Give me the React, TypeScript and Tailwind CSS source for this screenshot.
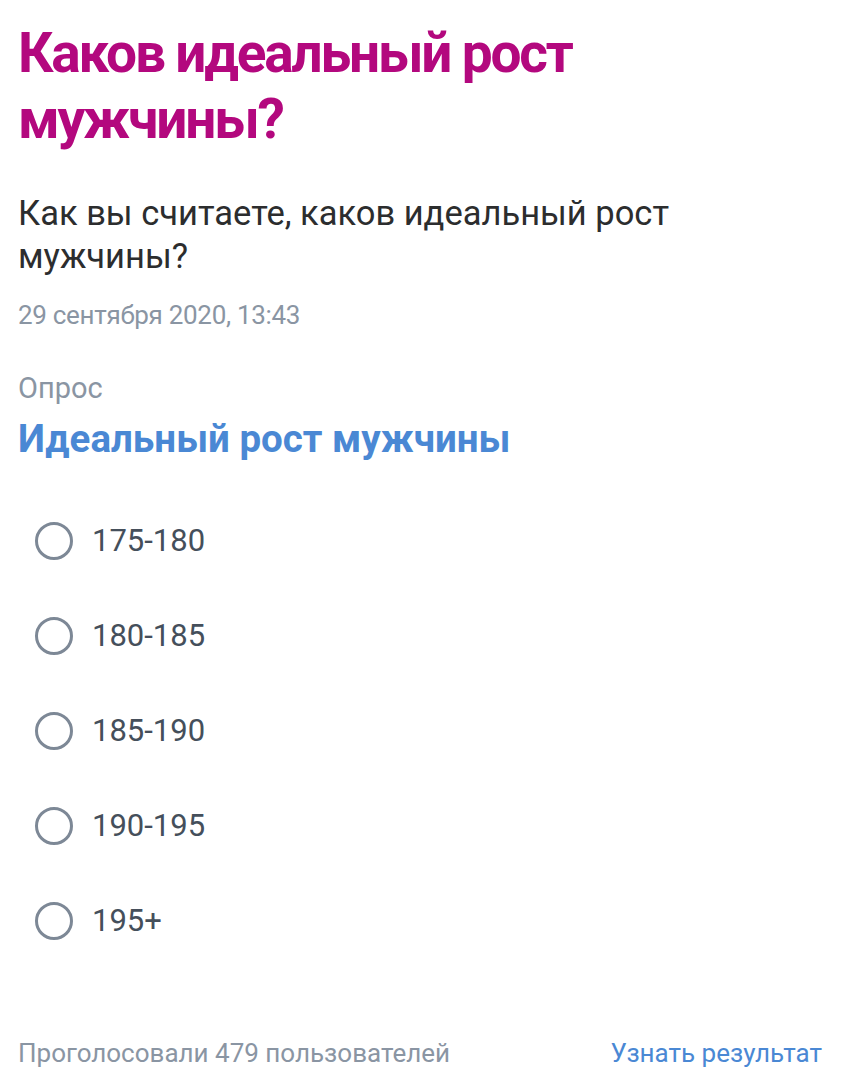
import React from "react"

const options = ["175-180", "180-185", "185-190", "190-195", "195+"]

const font = { fontFamily: "Roboto, 'Noto Sans', sans-serif" }

export default function App() {
  return (
    <div
      className="flex h-[1080px] w-[850px] flex-col bg-white"
      style={font}
    >
      <div className="flex flex-1 flex-col px-[18px]">
        <h1 className="mt-[20px] text-[55px] leading-[66px] font-bold tracking-[-2.2px] text-[#b3087e]">
          Каков идеальный рост мужчины?
        </h1>

        <p className="mt-[40px] w-[700px] text-[34.5px] leading-[43px] text-[#2c2d2e]">
          Как вы считаете, каков идеальный рост мужчины?
        </p>

        <div className="mt-[22px] text-[26px] leading-[30px] tracking-[-0.3px] text-[#8a95a3]">
          29 сентября 2020, 13:43
        </div>

        <div className="mt-[41px] text-[29px] leading-[34px] text-[#8a95a3]">
          Опрос
        </div>
        <div className="mt-[12px] text-[38.5px] leading-[44px] font-bold text-[#4a88d4]">
          Идеальный рост мужчины
        </div>

        <ul className="mt-[32px] flex flex-col">
          {options.map((o) => (
            <li key={o} className="flex h-[95px] items-center gap-[19px] pl-[17px]">
              <span className="h-[38px] w-[38px] shrink-0 rounded-full border-[3px] border-[#7d8896]" />
              <span className="text-[31px] leading-[36px] text-[#454f5b]">
                {o}
              </span>
            </li>
          ))}
        </ul>
      </div>

      <div className="flex items-center justify-between px-[18px] pb-[11px] text-[26px] leading-[32px]">
        <span className="text-[#8a95a3]">Проголосовали 479 пользователей</span>
        <span className="mr-[10px] text-[#4a88d4]">Узнать результат</span>
      </div>
    </div>
  )
}
